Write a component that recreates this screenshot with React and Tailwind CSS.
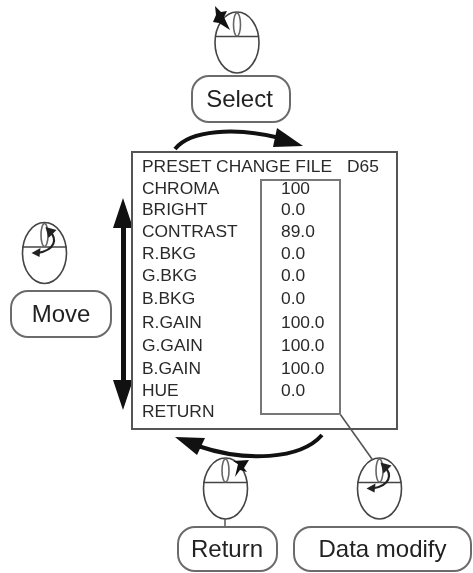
import React from 'react';

const rows = [
  { label: 'CHROMA', value: '100', h: 'h-[21px]' },
  { label: 'BRIGHT', value: '0.0', h: 'h-[22px]' },
  { label: 'CONTRAST', value: '89.0', h: 'h-[22px]' },
  { label: 'R.BKG', value: '0.0', h: 'h-[22px]' },
  { label: 'G.BKG', value: '0.0', h: 'h-[22px]' },
  { label: 'B.BKG', value: '0.0', h: 'h-[24px]' },
  { label: 'R.GAIN', value: '100.0', h: 'h-[24px]' },
  { label: 'G.GAIN', value: '100.0', h: 'h-[22px]' },
  { label: 'B.GAIN', value: '100.0', h: 'h-[23px]' },
  { label: 'HUE', value: '0.0', h: 'h-[22px]' },
  { label: 'RETURN', value: '', h: 'h-[20px]' },
];

// mouse outline, centred on cx / cy
function Mouse({ cx, cy }) {
  return (
    <g fill="none" stroke="#444" strokeWidth="1.6">
      <ellipse cx={cx} cy={cy} rx="22" ry="30.5" />
      <line x1={cx - 22} y1={cy - 6} x2={cx + 22} y2={cy - 6} />
      <ellipse cx={cx} cy={cy - 18} rx="3.5" ry="11.5" stroke="#666" />
    </g>
  );
}

// the turning arrow drawn over the wheel
function Turn({ cx, cy }) {
  return (
    <g transform={`translate(${cx} ${cy})`} fill="#222">
      <path d="M5 -22 C13 -14 11 -3 -7 0" fill="none" stroke="#222" strokeWidth="2.2" />
      <polygon points="1,-26 12,-23 4,-15" />
      <polygon points="-13,0 -4,-5 -5,4" />
    </g>
  );
}

function Label({ className, children }) {
  return (
    <div className={`absolute flex items-center justify-center border-2 border-[#6b6b6b] rounded-[18px] bg-white text-[24px] text-[#222] ${className}`}>
      {children}
    </div>
  );
}

export default function App() {
  return (
    <div className="relative w-[473px] h-[573px] bg-white overflow-hidden blur-[0.3px] font-['Liberation_Sans',Arial,sans-serif]">
      <svg className="absolute inset-0" width="473" height="573" viewBox="0 0 473 573">
        <Mouse cx={237} cy={42.5} />
        <polygon points="215,6 221,12 227,11 224,17 230,30 219,23 213,22 216,15" fill="#111" />

        <path d="M175 149 C190 130 235 127 280 138" fill="none" stroke="#111" strokeWidth="4" />
        <polygon points="303,146 277,128 273,147" fill="#111" />

        <Mouse cx={44.5} cy={253} />
        <Turn cx={44.5} cy={253} />

        <rect x="121" y="226" width="5" height="156" fill="#111" />
        <polygon points="123,198 113,228 133,228" fill="#111" />
        <polygon points="123,410 113,380 133,380" fill="#111" />

        <path d="M322 435 C300 460 245 462 198 446" fill="none" stroke="#111" strokeWidth="4" />
        <polygon points="175,437 205,438 197,455" fill="#111" />

        <Mouse cx={225.5} cy={488.5} />
        <polygon points="235,477 238,464 233,461 249,460 244,468 247,472 240,470" fill="#111" />
        <line x1="225" y1="519" x2="225" y2="527" stroke="#555" strokeWidth="1.5" />

        <line x1="340" y1="414" x2="372" y2="459" stroke="#555" strokeWidth="1.6" />
        <Mouse cx={379.5} cy={488.5} />
        <Turn cx={379.5} cy={488.5} />
      </svg>

      <Label className="left-[191px] top-[75px] w-[100px] h-[48px] pr-[3px]">Select</Label>
      <Label className="left-[10px] top-[290px] w-[102px] h-[48px]">Move</Label>
      <Label className="left-[177px] top-[526px] w-[101px] h-[46px] pr-[1px]">Return</Label>
      <Label className="left-[293px] top-[526px] w-[179px] h-[46px]">Data modify</Label>

      <div className="absolute left-[131px] top-[151px] w-[267px] h-[279px] border-2 border-[#555] pl-[9px] pt-[3px] text-[17.4px] leading-none text-[#2a2a2a]">
        <div className="flex items-center h-[22px]">
          <span className="w-[205px] whitespace-nowrap">PRESET CHANGE FILE</span>
          <span>D65</span>
        </div>
        {rows.map((r) => (
          <div key={r.label} className={`flex items-center ${r.h}`}>
            <span className="w-[139px]">{r.label}</span>
            <span>{r.value}</span>
          </div>
        ))}
        <div className="absolute left-[127px] top-[26px] w-[81px] h-[236px] border-2 border-[#777]" />
      </div>
    </div>
  );
}
